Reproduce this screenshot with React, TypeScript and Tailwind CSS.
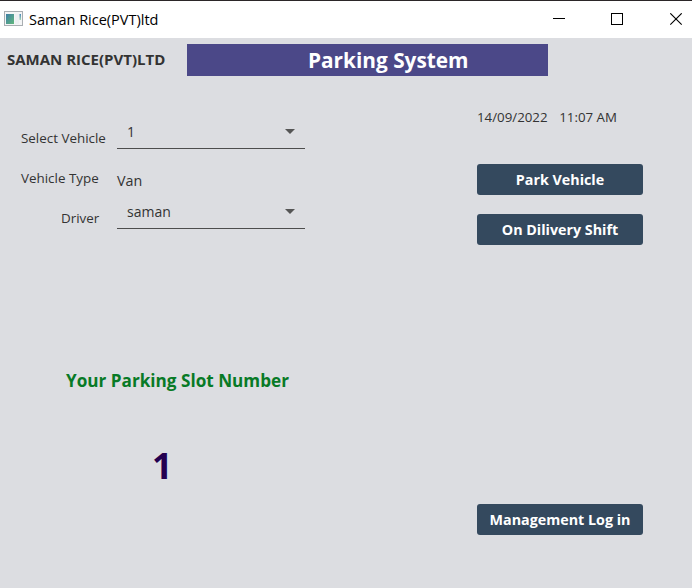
import React from "react";

function Select({ value }: { value: string }) {
  return (
    <div className="flex h-[34px] w-[188px] justify-between border-b border-[#4d4d4d] pl-2.5 pr-[10px]">
      <span className="text-[14px] leading-[34px]">{value}</span>
      <svg className="mt-[14px]" width="10" height="5" viewBox="0 0 10 5">
        <path d="M0 0H10L5 5Z" fill="#555555" />
      </svg>
    </div>
  );
}

function Button({ children, className }: { children: string; className: string }) {
  return (
    <button
      className={`flex h-[31px] w-[166px] items-center justify-center whitespace-nowrap rounded-[3px] bg-[#34495e] text-[14.3px] font-bold text-white ${className}`}
    >
      {children}
    </button>
  );
}

export default function App() {
  return (
    <div className="flex h-[588px] w-[692px] flex-col overflow-hidden bg-[#dcdde1] font-['Open_Sans','Noto_Sans',sans-serif] text-[#333333]">
      <header className="flex h-[38px] shrink-0 items-center border-t border-[#2b2628] bg-white text-black">
        <svg className="mb-0.5 ml-1" width="19" height="15" viewBox="0 0 19 15">
          <defs>
            <linearGradient id="pane" x1="0" y1="0" x2="1" y2="1">
              <stop offset="0" stopColor="#3f7fa6" />
              <stop offset="1" stopColor="#62b87c" />
            </linearGradient>
            <linearGradient id="strip" x1="0" y1="0" x2="0" y2="1">
              <stop offset="0" stopColor="#4a86b8" />
              <stop offset="1" stopColor="#a5d8b5" />
            </linearGradient>
          </defs>
          <rect x="0.5" y="0.5" width="18" height="14" fill="#f4f5f6" stroke="#a9aeb2" />
          <rect x="2" y="3" width="8" height="10" fill="url(#pane)" />
          <rect x="11" y="3" width="4" height="10" fill="#edf0f2" />
          <rect x="15.5" y="3" width="1.5" height="6" fill="url(#strip)" />
        </svg>
        <span className="ml-1.5 whitespace-nowrap text-[14.5px] leading-5">Saman Rice(PVT)ltd</span>
        <svg className="ml-auto mr-[9px]" width="130" height="13" viewBox="0 0 130 13" fill="none" stroke="#000" shapeRendering="crispEdges">
          <path d="M0 5.5H12" />
          <rect x="58.5" y="0.5" width="11" height="11" />
          <path d="M117.3 0.3L128.7 11.7M128.7 0.3L117.3 11.7" shapeRendering="auto" strokeWidth="1.1" />
        </svg>
      </header>
      <div className="mt-1.5 flex h-8 shrink-0">
        <h1 className="w-[187px] whitespace-nowrap pl-[7px] text-[15px] font-bold leading-[31px]">SAMAN RICE(PVT)LTD</h1>
        <div className="w-[361px] whitespace-nowrap bg-[#4b4888] pl-[121px] text-[20.8px] font-bold leading-8 text-white">Parking System</div>
      </div>
      <main className="flex grow">
        <section className="w-[477px] whitespace-nowrap text-[13.4px]">
          <div className="mt-[39px] flex h-[34px]">
            <span className="w-[117px] pl-[21px] pt-[14px] leading-[18px]">Select Vehicle</span>
            <Select value="1" />
          </div>
          <div className="mt-4 flex h-[30px]">
            <span className="w-[117px] pl-[21px] pt-1 leading-[18px]">Vehicle Type</span>
            <span className="pt-1.5 text-[14.3px] leading-5">Van</span>
          </div>
          <div className="flex h-[34px]">
            <span className="w-[117px] pl-[61px] pt-[14px] leading-[18px]">Driver</span>
            <Select value="saman" />
          </div>
          <h2 className="mt-[140px] pl-[66px] text-[17.15px] font-bold leading-6 text-[#087a26]">Your Parking Slot Number</h2>
          <p className="mt-[52px] pl-[152px] text-[36px] font-bold leading-[42px] text-[#24004f]">1</p>
        </section>
        <aside className="w-[166px]">
          <div className="mt-8 flex justify-between whitespace-nowrap pr-[26px] text-[13.3px] leading-[18px]">
            <span>14/09/2022</span>
            <span>11:07 AM</span>
          </div>
          <Button className="mt-[38px]">Park Vehicle</Button>
          <Button className="mt-[19px]">On Dilivery Shift</Button>
          <Button className="mt-[259px]">Management Log in</Button>
        </aside>
      </main>
    </div>
  );
}
